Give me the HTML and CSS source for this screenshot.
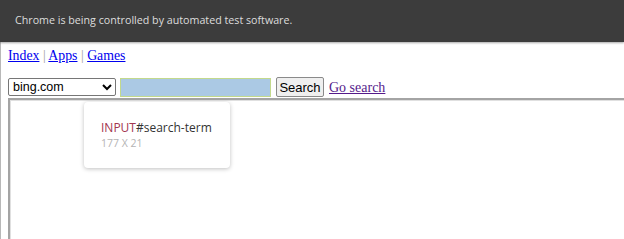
FILE: index.html
```html
<!DOCTYPE html>
<html>
<head>
<meta charset="utf-8">
<link rel="stylesheet" href="styles.css">
</head>
<body>
<div class="infobar">Chrome is being controlled by automated test software.</div>
<div class="page">
  <div class="nav"><a href="#" class="lnk">Index</a> <span class="sep">|</span> <a href="#" class="lnk">Apps</a> <span class="sep">|</span> <a href="#" class="lnk">Games</a></div>
  <div class="form">
    <select class="engine"><option>bing.com</option></select>
    <input class="term" id="search-term" type="text">
    <button class="btn">Search</button>
    <a href="#" class="go">Go search</a>
  </div>
  <div class="frame"></div>
  <div class="tip">
    <div class="tip-name"><span class="tag">INPUT</span>#search-term</div>
    <div class="tip-size">177 X 21</div>
  </div>
</div>
</body>
</html>
```
FILE: styles.css
```css
html, body { margin: 0; padding: 0; height: 100%; overflow: hidden; background: #fff; }
.infobar {
  height: 42px;
  background: #3c3c3c;
  color: #dcdcdc;
  font-family: "Open Sans", sans-serif;
  font-size: 10.7px;
  line-height: 40px;
  padding-left: 15px;
  box-shadow: 0 1px 2px rgba(0,0,0,0.35);
  position: relative;
  z-index: 2;
}
.page {
  position: relative;
  border-left: 1px solid #b8b8b8;
  padding-left: 7px;
  height: calc(100% - 42px);
  box-sizing: border-box;
  overflow: hidden;
}
.nav {
  font-family: "Liberation Serif", serif;
  font-size: 13.8px;
  line-height: 16px;
  padding-top: 6px;
  height: 16px;
}
.lnk { color: #0000ee; }
.sep { color: #a0a0a0; }
.form {
  display: flex;
  align-items: center;
  margin-top: 13px;
  height: 20px;
  gap: 0;
}
.engine {
  width: 108px;
  height: 18px;
  margin: 0 4px 0 0;
  font-family: "Liberation Sans", sans-serif;
  font-size: 12.5px;
  border: 1px solid #767676;
  border-radius: 2px;
  background: #fff;
  padding: 0;
}
.term {
  width: 151px;
  height: 19px;
  box-sizing: border-box;
  margin: 0 5px 0 0;
  border: 1px solid #c3d98c;
  background: #abc9e4;
  padding: 0;
}
.btn {
  width: 48px;
  height: 20px;
  box-sizing: border-box;
  margin: 0 5px 0 0;
  font-family: "Liberation Sans", sans-serif;
  font-size: 13px;
  background: #efefef;
  border: 1px solid #8a8a8a;
  border-radius: 2px;
  padding: 0;
  color: #000;
}
.go {
  color: #551a8b;
  font-family: "Liberation Serif", serif;
  font-size: 14px;
  line-height: 16px;
  margin-top: 1px;
}
.frame {
  margin-top: 1px;
  width: 700px;
  height: 300px;
  border-top: 2px solid #a4a4a4;
  border-left: 2px solid #a4a4a4;
  box-shadow: inset 1px 1px 0 #e0e0e0;
}
.tip {
  position: absolute;
  left: 83px;
  top: 60px;
  width: 146px;
  height: 66px;
  box-sizing: border-box;
  background: #fff;
  border-radius: 4px;
  box-shadow: 0 1px 4px rgba(0,0,0,0.25);
  padding: 18px 0 0 17px;
  font-family: "Open Sans", sans-serif;
}
.tip-name { font-size: 12px; line-height: 16px; color: #333; }
.tag { color: #a3364f; }
.tip-size { font-size: 10.5px; line-height: 14px; color: #b4b4b4; }
```
